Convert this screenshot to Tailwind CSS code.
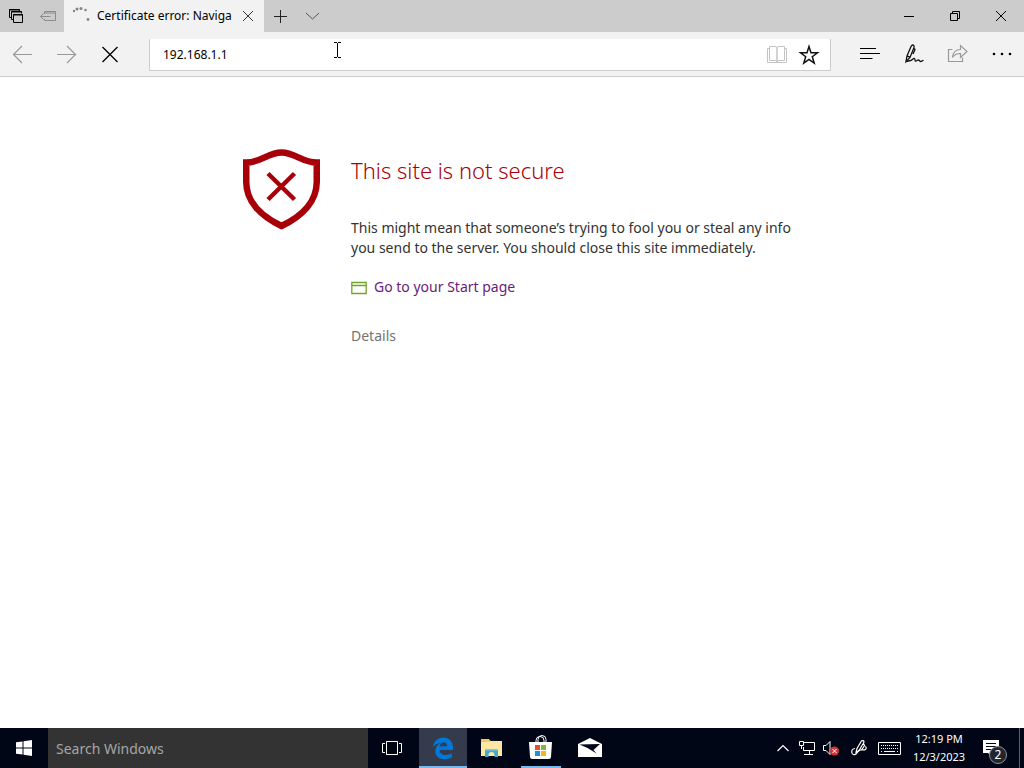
<!DOCTYPE html>
<html lang="en">
  <head>
    <meta charset="UTF-8" />
    <meta name="viewport" content="width=device-width, initial-scale=1.0" />
    <script src="https://cdn.jsdelivr.net/npm/@tailwindcss/browser@4"></script>

    <title>Certificate error: Navigation blocked</title>
  </head>
  <body class="flex h-screen flex-col overflow-hidden bg-white font-['Noto_Sans','Open_Sans',sans-serif] text-black">
    <!-- Title bar -->
    <header class="flex h-8 shrink-0 bg-[#cccccc]">
      <button aria-label="Tabs you've set aside" class="flex w-8 items-center justify-center">
        <svg class="size-4" viewBox="0 0 16 16" fill="none" stroke="#000">
          <path d="M3.500 9.500h-2v-8h10v2M1 2h11M5.500 11.500h-2v-8h10v2M3 4h11" />
          <path d="M5.500 6.500h9v8h-9zM5 7h10" />
        </svg>
      </button>
      <button aria-label="Set these tabs aside" class="flex w-8 items-center justify-center">
        <svg class="size-4" viewBox="0 0 16 16" fill="none" stroke="#8c8c8c">
          <path d="M4.500 6V3.500h11v9h-11V11M4 5h12M.5 8.500h10M3.500 5.500l-3 3 3 3" />
        </svg>
      </button>

      <div class="flex w-50 items-center bg-[#f2f2f2] pr-2 pl-2">
        <svg class="size-5 shrink-0" viewBox="0 0 20 20" fill="#858585">
          <circle cx="2" cy="5" r="1.200" />
          <circle cx="5" cy="3" r="1.500" />
          <circle cx="9" cy="2.500" r="1.500" />
          <circle cx="13.500" cy="4" r="1.300" />
          <circle cx="16" cy="13.500" r="1.400" />
        </svg>
        <span class="ml-1 flex-1 pl-px text-xs whitespace-nowrap">Certificate error: Naviga</span>
        <button aria-label="Close tab" class="flex w-4 items-center justify-center">
          <svg class="size-4" viewBox="0 0 16 16" fill="none" stroke="#333">
            <path d="M3 3l10 10M13 3L3 13" />
          </svg>
        </button>
      </div>

      <button aria-label="New tab" class="flex w-8 items-center justify-center">
        <svg class="size-4" viewBox="0 0 16 16" fill="none" stroke="#222">
          <path d="M8.500 2v13M2 8.500h13" />
        </svg>
      </button>
      <button aria-label="Show tab previews" class="flex w-8 items-center justify-center">
        <svg class="size-4" viewBox="0 0 16 16" fill="none" stroke="#555">
          <path d="M2 5l6.500 6L15 5" />
        </svg>
      </button>

      <div class="ml-auto flex">
        <button aria-label="Minimize" class="flex w-[46px] items-center justify-center">
          <svg class="size-4" viewBox="0 0 16 16" fill="none" stroke="#000">
            <path d="M3 8.500h10" />
          </svg>
        </button>
        <button aria-label="Restore" class="flex w-[46px] items-center justify-center">
          <svg class="size-4" viewBox="0 0 16 16" fill="none" stroke="#000">
            <path d="M3.500 5.500h7v7h-7zM5.500 5.500v-2h7v7h-2" />
          </svg>
        </button>
        <button aria-label="Close" class="flex w-[46px] items-center justify-center">
          <svg class="size-4" viewBox="0 0 16 16" fill="none" stroke="#000">
            <path d="M3 3l10 10M13 3L3 13" />
          </svg>
        </button>
      </div>
    </header>

    <!-- Toolbar -->
    <nav class="relative flex h-[45px] shrink-0 items-stretch border-b border-[#cccccc] bg-[#f2f2f2]">
      <button aria-label="Back" class="flex w-11 items-center justify-center">
        <svg class="size-6" viewBox="0 0 24 24" fill="none" stroke="#999" stroke-width="1.200">
          <path d="M22 12.500H3.500M12 4l-8.500 8.500L12 21" />
        </svg>
      </button>
      <button aria-label="Forward" class="flex w-11 items-center justify-center">
        <svg class="size-6" viewBox="0 0 24 24" fill="none" stroke="#999" stroke-width="1.200">
          <path d="M3 12.500h18.500M13 4l8.500 8.500L13 21" />
        </svg>
      </button>
      <button aria-label="Stop" class="flex w-11 items-center justify-center">
        <svg class="size-6" viewBox="0 0 24 24" fill="none" stroke="#000" stroke-width="1.300">
          <path d="M4.500 5l15 15M19.500 5l-15 15" />
        </svg>
      </button>

      <div class="mx-[17px] mt-[7px] mb-[5px] flex flex-1 items-center border-r border-b border-l border-[#cccccc] bg-white pr-[5px]">
        <label for="address" class="sr-only">Address</label>
        <input id="address" type="text" value="192.168.1.1" class="h-6 min-w-0 flex-1 bg-transparent px-[13px] text-xs leading-5 outline-none" />
        <button aria-label="Reading view" class="flex w-8 items-center justify-center">
          <svg class="size-6" viewBox="0 0 24 24" fill="none" stroke="#c4c4c4">
            <path d="M4.500 3.500H11q1 .5 1 1.500v14q-.5-1.500-2-1.500H4.500zM19.500 3.500H13q-1 .5-1 1.500v14q.5-1.500 2-1.500h5.500z" />
            <path d="M4.500 5.500h-2v14h19v-14h-2" />
          </svg>
        </button>
        <button aria-label="Add to favorites" class="flex w-8 items-center justify-center">
          <svg class="size-6" viewBox="0 0 24 24" fill="none" stroke="#111" stroke-width="1.500">
            <path d="M12 3.500l2 6.200 6.500.1-5.200 3.900 1.900 6.300-5.200-3.700L6.800 20l1.900-6.300-5.200-3.900 6.500-.1z" />
          </svg>
        </button>
      </div>

      <button aria-label="Hub" class="flex w-11 items-center justify-center">
        <svg class="size-6" viewBox="0 0 24 24" fill="none" stroke="#000">
          <path d="M2 6.500h16M2 11.500h20M2 16.500h12.500" />
        </svg>
      </button>
      <button aria-label="Make a Web Note" class="flex w-11 items-center justify-center">
        <svg class="size-6" viewBox="0 0 24 24" fill="none" stroke="#111" stroke-width="1.300">
          <path d="M4 19.500l1-5.500L9 4.500q1-2 2.400-1.400 1.300.8.500 2.700L8 15.500l-4 4zM5 13.500L8 15.500M11.500 5.500l1.500 2-2 4.500" />
          <path d="M4 19.500l4.500-1c2-.5 2.800-2.500 4-2s-.2 2.500 1 2.700 2-1.500 3.100-1.200 1 1.500 2 1.500 1.800-.5 2.900-1.200" />
        </svg>
      </button>
      <button aria-label="Share" class="flex w-11 items-center justify-center">
        <svg class="size-6" viewBox="0 0 24 24" fill="none" stroke="#999" stroke-width="1.200">
          <path d="M6.500 7.500h-4v12h14v-4" />
          <path d="M6.500 15.500c.5-5 3-8 8-8v-4l6.500 6-6.500 6v-4c-4 0-6 .8-8 4z" />
        </svg>
      </button>
      <button aria-label="More" class="flex w-11 items-center justify-center">
        <svg class="size-6" viewBox="0 0 24 24" fill="#000">
          <circle cx="4" cy="12" r="1.300" />
          <circle cx="12" cy="12" r="1.300" />
          <circle cx="20" cy="12" r="1.300" />
        </svg>
      </button>

      <!-- Text cursor -->
      <svg class="absolute top-2 left-[333px] h-5 w-2" viewBox="0 0 8 20" fill="none" stroke="#000">
        <path d="M1 2.500h3M5 2.500h3M4.500 3v14M1 17.500h3M5 17.500h3" />
      </svg>
    </nav>

    <!-- Page -->
    <main class="flex min-h-0 flex-1 justify-center pt-[70px] pl-7">
      <svg class="mr-[29px] h-[84px] w-20 shrink-0" viewBox="0 0 80 84" fill="none" stroke="#a80008">
        <path stroke-width="6.500" d="M4.250 15.500C19 15.500 26 5.500 39.500 5.500S60 15.500 74.750 15.500V35c0 19-14.250 34-35.250 44C18.500 69 4.250 54 4.250 35z" />
        <path stroke-width="4.500" d="M26 26.500l26.500 26M52.500 26.500L26 52.500" />
      </svg>
      <div class="w-[459px]">
        <h1 class="mt-[7px] text-[22px] leading-8 font-light text-[#a80008]">This site is not secure</h1>
        <p class="mt-8 text-sm leading-5 text-[#333]">
          This might mean that someone’s trying to fool you or steal any info
          you send to the server. You should close this site immediately.
        </p>
        <a href="#" class="mt-[19px] flex items-center text-sm leading-5 text-[#6b1a7c]">
          <svg class="mr-[7px] size-4" viewBox="0 0 16 16" fill="none" stroke="#6fa52a" stroke-width="1.300">
            <path d="M.8 3.500h14.400v11H.8zM1 6.500h14" />
          </svg>
          Go to your Start page
        </a>
        <button class="mt-[29px] block text-sm leading-5 text-[#737373]">Details</button>
      </div>
    </main>

    <!-- Taskbar -->
    <footer class="flex h-10 shrink-0 bg-[#000616] text-white">
      <button aria-label="Start" class="flex w-12 items-center justify-center">
        <svg class="size-4" viewBox="0 0 16 16" fill="#fff">
          <path d="M0 2.300l6.500-.9v6.100H0zM7.500 1.200L16 0v7.500H7.500zM0 8.500h6.500v6.100L0 13.700zM7.500 8.500H16V16l-8.500-1.200z" />
        </svg>
      </button>
      <label for="search" class="sr-only">Search Windows</label>
      <input id="search" type="text" placeholder="Search Windows" class="h-10 w-80 min-w-0 bg-[#333333] px-2 text-sm leading-6 outline-none placeholder:text-[#a6a6a6]" />
      <button aria-label="Task View" class="mr-[3px] flex w-12 items-center justify-center">
        <svg class="h-4 w-5" viewBox="0 0 20 16" fill="none" stroke="#fff">
          <path d="M4.500 1.500h11v13h-11zM3 3.500H.5v9H3M17 3.500h2.500v9H17" />
        </svg>
      </button>
      <div class="flex gap-px">
        <button aria-label="Microsoft Edge" class="flex w-12 items-center justify-center border-b-2 border-[#76b9ed] bg-[#333b4d] pt-0.5">
          <svg class="h-6 w-6" viewBox="0 0 24 24" fill="#0078d7">
            <path d="M2 11C3 5 7 1.500 12.300 1.500 18.500 1.500 22 6 22 11.500V14H8.500c.2 3.500 3 5 6.200 5 2.300 0 4.300-.7 6.100-1.700v4.200c-2 1.200-4.600 1.700-7.300 1.700C8 23.200 4.300 20 4.300 15.200c0-3.700 2-6.600 5.200-8.200-3.300.3-6 2-7.500 4zM8.600 10.200h7.500c0-2.300-1-3.700-3.400-3.700-2.200 0-3.600 1.500-4.100 3.700z" />
          </svg>
        </button>
        <button aria-label="File Explorer" class="flex w-12 items-center justify-center">
          <svg class="size-6" viewBox="0 0 24 24">
            <path fill="#f0c766" d="M1 3h8l1.500 2H22v3H1z" />
            <path fill="#fde7a4" d="M1 6h8l1.500-1H22v15H1z" />
            <path fill="#45a9cf" d="M5 15q0-2 2-2h9q2 0 2 2v6h-3.500v-2a3 3 0 00-6 0v2H5z" />
            <path fill="#7cc7e8" d="M6 13h11v1.500H6z" />
          </svg>
        </button>
        <button aria-label="Store" class="mx-1 flex w-10 items-center justify-center border-b-2 border-[#76b9ed]">
          <svg class="size-6" viewBox="0 0 24 24">
            <path fill="none" stroke="#fff" d="M7 7.500V5.500a4 4 0 018 0v2M9 7V4.500a4 4 0 018 0V7" />
            <path fill="#fff" d="M0 7h23l-1 15q-.2 2-2 2H3q-1.800 0-2-2z" />
            <path fill="#e4502b" d="M6 10h5v5H6z" />
            <path fill="#7db83a" d="M12 10h5v5h-5z" />
            <path fill="#1d93d2" d="M6 16h5v5H6z" />
            <path fill="#f5b51d" d="M12 16h5v5h-5z" />
          </svg>
        </button>
        <button aria-label="Mail" class="flex w-12 items-center justify-center">
          <svg class="size-6" viewBox="0 0 24 24">
            <path fill="#fff" d="M0 8l12-6 12 6v13H0z" />
            <path fill="#000616" d="M1.500 8.500L22 8l-6.500 6 3 3.500L9.500 12z" />
          </svg>
        </button>
      </div>

      <div class="ml-auto flex items-center">
        <button aria-label="Show hidden icons" class="flex w-6 justify-center">
          <svg class="size-4" viewBox="0 0 16 16" fill="none" stroke="#fff" stroke-width="1.200">
            <path d="M2.500 11L8 5.500l5.500 5.500" />
          </svg>
        </button>
        <button aria-label="Network" class="flex w-6 justify-center">
          <svg class="size-4" viewBox="0 0 16 16" fill="none" stroke="#fff">
            <path d="M5 2.500h10.500v8h-11V7M10.500 11v3.500M5 14.500h9M.5 1.500h4v4h-4zM2.500 6v3" />
          </svg>
        </button>
        <button aria-label="Volume" class="flex w-6 justify-center">
          <svg class="size-4" viewBox="0 0 16 16" fill="none" stroke="#fff">
            <path d="M.5 5.500H3l4-4v13l-4-4H.5z" />
            <circle cx="11.500" cy="11" r="4.500" fill="#d13438" stroke="none" />
            <path d="M9.500 9l4 4M13.500 9l-4 4" />
          </svg>
        </button>
        <button aria-label="Windows Ink Workspace" class="flex w-8 justify-center">
          <svg class="size-4" viewBox="0 0 16 16" fill="none" stroke="#fff" stroke-width="1.200">
            <path d="M5 12.500l1-4L10.500 1q1.500-1 2.300.2.500.8-.3 1.800L8 10.500zM12.500 3.500l1 2-3 4.500" />
            <path d="M4 8.500C1.500 8.500.5 10.500.8 12.500s2.700 2.800 4.200 1.500 2-3.500 4.500-4 3.500.5 4.800-.5 1.200-2.500-.3-3" />
          </svg>
        </button>
        <button aria-label="Touch keyboard" class="flex w-7 justify-center">
          <svg class="h-4 w-6 shrink-0" viewBox="0 0 24 16" fill="none" stroke="#fff">
            <path d="M1.500 2.500h22v12h-22z" />
            <path stroke-dasharray="1 1" d="M4 5.500h17M4 8.500h17" />
            <path d="M4 11.500h1M7 11.500h11M20 11.500h1" />
          </svg>
        </button>
        <button class="w-18 text-center text-[11px] leading-[18px] whitespace-nowrap">
          12:19 PM<br />12/3/2023
        </button>
        <button aria-label="Action center, 2 new notifications" class="relative mr-1 flex w-10 justify-center">
          <svg class="size-6" viewBox="0 0 24 24">
            <path fill="#fff" d="M0 4h16v13H9v4l-4-4H0z" />
            <path fill="none" stroke="#000616" d="M3 7.500h10M3 10.500h10M3 13.500h6" />
          </svg>
          <span class="absolute top-2.5 left-[14px] flex size-[18px] items-center justify-center rounded-full border border-[#8b8f96] bg-[#22262f] text-xs leading-4">2</span>
        </button>
        <button aria-label="Show desktop" class="h-10 w-[5px] border-l border-[#5a5e68]"></button>
      </div>
    </footer>
  </body>
</html>
